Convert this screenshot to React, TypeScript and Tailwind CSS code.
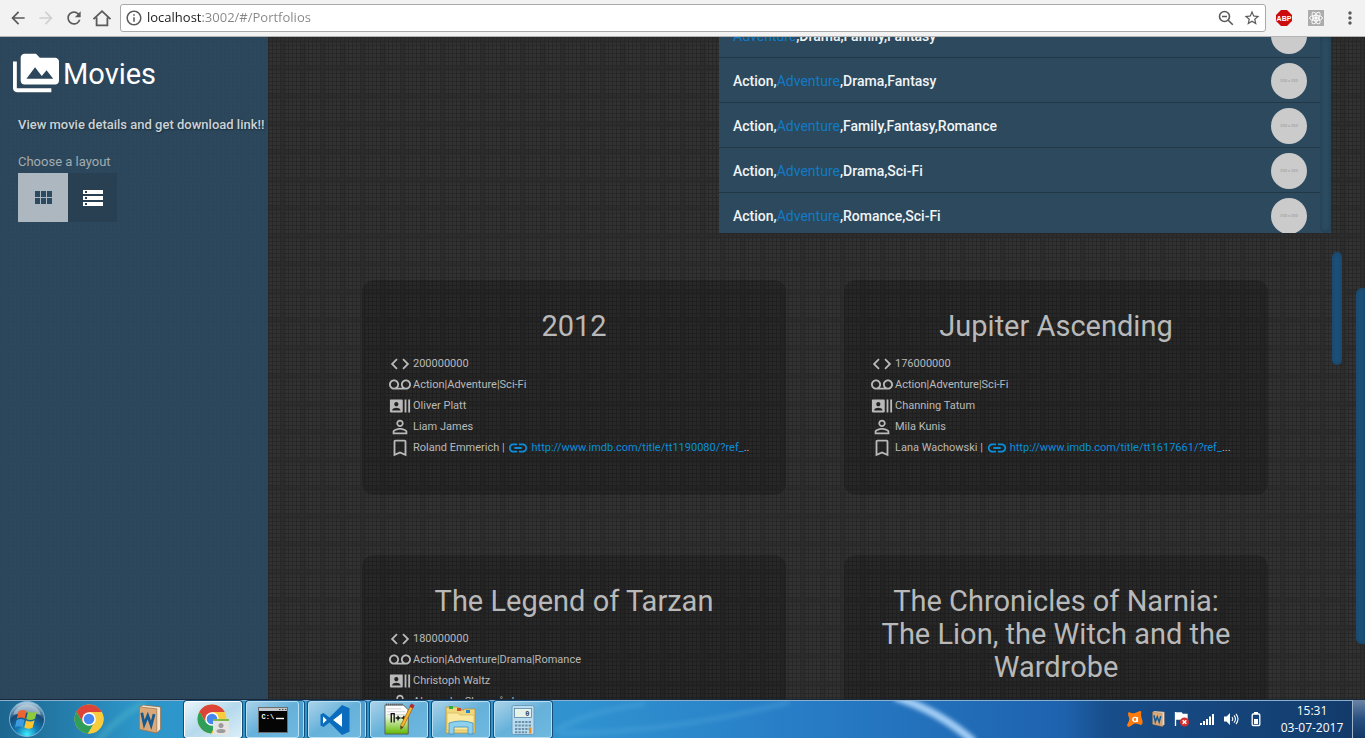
import React from "react";
import {
  MdArrowBack,
  MdArrowForward,
  MdRefresh,
  MdInfoOutline,
  MdStarBorder,
  MdMoreVert,
  MdPermMedia,
  MdCode,
  MdVoicemail,
  MdRecentActors,
  MdPermIdentity,
  MdBookmarkBorder,
  MdLink,
} from "react-icons/md";

type Movie = {
  title: string;
  budget: string;
  genres: string;
  actor: string;
  coActor: string;
  director?: string;
  url?: string;
  rest?: string;
};

const movies: Movie[] = [
  {
    title: "2012",
    budget: "200000000",
    genres: "Action|Adventure|Sci-Fi",
    actor: "Oliver Platt",
    coActor: "Liam James",
    director: "Roland Emmerich",
    url: "http://www.imdb.com/title/tt1190080/?ref_",
    rest: "..",
  },
  {
    title: "Jupiter Ascending",
    budget: "176000000",
    genres: "Action|Adventure|Sci-Fi",
    actor: "Channing Tatum",
    coActor: "Mila Kunis",
    director: "Lana Wachowski",
    url: "http://www.imdb.com/title/tt1617661/?ref_",
    rest: "...",
  },
  {
    title: "The Legend of Tarzan",
    budget: "180000000",
    genres: "Action|Adventure|Drama|Romance",
    actor: "Christoph Waltz",
    coActor: "Alexander Skarsgård",
  },
  {
    title: "The Chronicles of Narnia: The Lion, the Witch and the Wardrobe",
    budget: "180000000",
    genres: "Adventure|Family|Fantasy",
    actor: "Jim Broadbent",
    coActor: "Kiran Shah",
  },
];

const suggestions = [
  ["", ",Drama,Family,Fantasy"],
  ["Action,", ",Drama,Fantasy"],
  ["Action,", ",Family,Fantasy,Romance"],
  ["Action,", ",Drama,Sci-Fi"],
  ["Action,", ",Romance,Sci-Fi"],
];

function BrowserBar() {
  return (
    <header className="flex h-[37px] shrink-0 items-center border-b border-[#b5b5b5] bg-[#f2f2f2] text-[#5a5a5a]">
      <nav className="flex items-center gap-2 pl-2">
        <button aria-label="Back"><MdArrowBack className="size-5" /></button>
        <button aria-label="Forward" className="text-[#d0d0d0]"><MdArrowForward className="size-5" /></button>
        <button aria-label="Reload"><MdRefresh className="size-5" /></button>
        <button aria-label="Home">
          <svg viewBox="0 0 20 20" className="size-5" fill="none" stroke="currentColor" strokeWidth="1.8">
            <path d="M1.500 11.200 10 3.200l8.500 8M4.600 9.500v7.800h10.800V9.500" />
          </svg>
        </button>
      </nav>
      <div className="ml-2 flex h-7 flex-1 items-center rounded-[3px] border border-[#a9a9a9] bg-white pr-1">
        <MdInfoOutline className="ml-1 size-[18px]" />
        <input
          aria-label="Address"
          defaultValue="localhost:3002/#/Portfolios"
          className="ml-1 min-w-0 flex-1 bg-linear-to-r from-[#1c1c1c] from-[55px] to-[#858585] to-[55px] bg-clip-text font-['Open_Sans',sans-serif] text-[13px] text-transparent outline-none"
        />
        <button aria-label="Zoom" className="mr-2">
          <svg viewBox="0 0 18 18" className="size-[18px]" fill="none" stroke="currentColor" strokeWidth="1.600">
            <circle cx="7.500" cy="7.500" r="5" />
            <path d="M5 7.500h5M11.200 11.200l4.600 4.600" />
          </svg>
        </button>
        <button aria-label="Bookmark"><MdStarBorder className="size-[18px]" /></button>
      </div>
      <div className="flex items-center gap-4 pr-[9px] pl-[10px]">
        <button aria-label="Adblock Plus">
          <svg viewBox="0 0 16 16" className="size-4">
            <path d="M5 0h6l5 5v6l-5 5H5l-5-5V5z" fill="#cc0c0c" />
            <text x="8" y="10.800" textAnchor="middle" fontFamily="Liberation Sans" fontWeight="700" fontSize="7" fill="#fff">ABP</text>
          </svg>
        </button>
        <button aria-label="React tools">
          <svg viewBox="0 0 16 16" className="size-4" fill="none" stroke="#fff" strokeWidth=".9">
            <rect width="16" height="16" fill="#acacac" stroke="none" />
            <ellipse cx="8" cy="8" rx="6.500" ry="2.600" />
            <ellipse cx="8" cy="8" rx="6.500" ry="2.600" transform="rotate(60 8 8)" />
            <ellipse cx="8" cy="8" rx="6.500" ry="2.600" transform="rotate(120 8 8)" />
            <circle cx="8" cy="8" r="1.300" fill="#fff" />
          </svg>
        </button>
        <button aria-label="Menu" className="-mr-1 flex w-5 justify-center"><MdMoreVert className="size-5" /></button>
      </div>
    </header>
  );
}

function Sidebar() {
  return (
    <aside className="w-[268px] shrink-0 bg-[#2c4a60]/90 pt-4">
      <h1 className="ml-[13px] flex h-10 items-center gap-1 text-[29px] leading-10 text-white">
        <MdPermMedia className="size-[46px] shrink-0" />
        <span className="pt-[2px]">Movies</span>
      </h1>
      <p className="mt-[18px] ml-[18px] text-[13px] leading-7 font-medium whitespace-nowrap text-[#cbd2d6] [text-shadow:1px_1px_2px_#1a2c3a]">
        View movie details and get download link!!
      </p>
      <p className="mt-[13px] ml-[18px] text-[13px] leading-5 text-[#a3abb0]">Choose a layout</p>
      <div className="mt-[1px] ml-[18px] flex">
        <button aria-label="Grid layout" className="flex h-[49px] w-[50px] items-center justify-center bg-[#acb7c0] text-[#2c4a60]">
          <svg viewBox="0 0 24 24" className="size-6" fill="currentColor">
            <path d="M4 11h5V5H4v6zm0 7h5v-6H4v6zm6 0h5v-6h-5v6zm6 0h5v-6h-5v6zm-6-7h5V5h-5v6zm6-6v6h5V5h-5z" />
          </svg>
        </button>
        <button aria-label="List layout" className="flex h-[49px] w-[49px] items-center justify-center bg-[#293f52] text-white">
          <svg viewBox="0 0 24 24" className="size-6" fill="currentColor">
            <path d="M2 20h20v-4H2v4zm2-3h2v2H4v-2zM2 4v4h20V4H2zm4 3H4V5h2v2zm-4 7h20v-4H2v4zm2-3h2v2H4v-2z" />
          </svg>
        </button>
      </div>
    </aside>
  );
}

function Suggestions() {
  return (
    <div className="mr-[25px] flex h-[196px] w-9/16 shrink-0 self-end overflow-hidden bg-[#2c495d]">
      <ul className="-mt-6 flex-1">
        {suggestions.map(([before, after], i) => (
          <li key={i} className="flex h-[45px] items-center justify-between border-b border-[#223847] pt-[2px] pr-[13px] pl-[14px] text-sm font-medium text-[#f1f4f6]">
            <span>
              {before}
              <span className="font-normal text-[#137ac6]">Adventure</span>
              {after}
            </span>
            <span className="flex size-9 items-center justify-center rounded-full bg-[#cbcbcb] text-[4px] font-bold text-[#a8a8a8]">
              350 x 350
            </span>
          </li>
        ))}
      </ul>
      <div className="w-[11px] rounded-b-md bg-[#2c4c63] shadow-[inset_0_0_5px_#20394a]" />
    </div>
  );
}

function Row({ icon, children }: { icon: React.ReactNode; children: React.ReactNode }) {
  return (
    <li className="flex h-[21px] items-center gap-[2px] whitespace-nowrap [&>svg]:size-[22px] [&>svg]:shrink-0">
      {icon}
      <span className="flex items-center pt-[1px] leading-[18px]">{children}</span>
    </li>
  );
}

function MovieCard({ movie }: { movie: Movie }) {
  return (
    <article className="min-h-[215px] min-w-0 rounded-xl bg-black/20 px-[27px] pt-[30px] text-[#b9b9b9]">
      <h2 className="text-center text-[29px] leading-[33px]">{movie.title}</h2>
      <ul className="mt-[10px] text-[11px]">
        <Row icon={<MdCode />}>{movie.budget}</Row>
        <Row icon={<MdVoicemail />}>{movie.genres}</Row>
        <Row icon={<MdRecentActors />}>{movie.actor}</Row>
        <Row icon={<MdPermIdentity />}>{movie.coActor}</Row>
        {movie.url && (
          <Row icon={<MdBookmarkBorder />}>
            {movie.director}&nbsp;|&nbsp;
            <a href={movie.url} className="flex items-center gap-[2px] text-[#0a8ed9]">
              <MdLink className="size-[22px]" />
              {movie.url}
            </a>
            {movie.rest}
          </Row>
        )}
      </ul>
    </article>
  );
}

function ChromeLogo() {
  return (
    <svg viewBox="0 0 30 30" className="size-[30px]">
      <circle cx="15" cy="15" r="14.500" fill="#f9cc3e" />
      <path d="M2.400 7.800A14.500 14.500 0 0 1 27.700 8H15L9 18.500z" fill="#dc4437" />
      <path d="M9 18.500 2.400 7.800A14.500 14.500 0 0 0 14 29.500l6.200-11z" fill="#2e9e58" />
      <path d="M15 8h12.700A14.500 14.500 0 0 1 14 29.500l7-11z" fill="#f9cc3e" />
      <circle cx="15" cy="15" r="6.800" fill="#fff" />
      <circle cx="15" cy="15" r="5.300" fill="#4686ef" />
    </svg>
  );
}

function BookLogo({ className }: { className: string }) {
  return (
    <svg viewBox="0 0 24 30" className={className}>
      <path d="M1 2 5 0l18 2v23l-4 4z" fill="#efe4d3" stroke="#8f6a48" strokeWidth=".8" />
      <path d="m1 2 18 2v25L1 25z" fill="#d9a878" stroke="#a87546" strokeWidth=".8" />
      <path d="m3.500 8 2.500 12 3.700-9 3.500 10 3-11.500" fill="none" stroke="#155a91" strokeWidth="2.800" />
    </svg>
  );
}

function StartOrb() {
  return (
    <svg viewBox="0 0 38 38" className="size-[38px]">
      <defs>
        <radialGradient id="orb" cx=".5" cy=".95" r=".9">
          <stop offset="0" stopColor="#3ff0ff" />
          <stop offset=".35" stopColor="#127ab5" />
          <stop offset=".7" stopColor="#164a78" />
          <stop offset="1" stopColor="#a9c5d8" />
        </radialGradient>
      </defs>
      <circle cx="19" cy="19" r="17.500" fill="url(#orb)" stroke="#7db4d6" />
      <path d="M5 15a14.500 14.500 0 0 1 28 0q-14-5-28 0z" fill="#d3e2ec" opacity=".55" />
      <path d="M10.500 11.500q4-2.500 8-.5l-1.700 7.500q-4-2-8 .3z" fill="#ed6430" />
      <path d="M20 11.500q4.500 2.300 9-.3l-2 7.600q-4.300 2.400-8.700.200z" fill="#8fca3c" />
      <path d="M8.500 20.200q4-2.300 8-.2l-1.800 7.200q-3.900-2-7.700.2z" fill="#3f9be0" />
      <path d="M18 20.400q4.300 2.200 8.600-.2l-1.900 7.300q-4.200 2.300-8.400.1z" fill="#fbc62f" />
    </svg>
  );
}

function TaskButton({ label, active, stacked, children }: { label: string; active?: boolean; stacked?: boolean; children: React.ReactNode }) {
  return (
    <div className={stacked ? "flex w-[58px] rounded-[3px] border-r border-[#b3dcf1] bg-[#4b9fd0] pr-1 ring-1 ring-[#174d78]" : "flex w-[58px] rounded-[3px] ring-1 ring-[#174d78]"}>
      <button
        aria-label={label}
        className={
          active
            ? "flex flex-1 items-center justify-center rounded-[3px] border border-white bg-linear-to-br from-[#e9f5fb] via-[#b5d9ec] to-[#d9eef8]"
            : "flex flex-1 items-center justify-center rounded-[3px] border border-[#b9dff2] bg-linear-to-br from-[#a9d2e8] via-[#65b1da] to-[#6fb9e0]"
        }
      >
        {children}
      </button>
    </div>
  );
}

function Taskbar() {
  return (
    <footer className="relative flex h-[39px] shrink-0 items-stretch overflow-hidden border-t border-[#17283a] bg-[#277bc5]">
      <svg className="absolute inset-0 h-full w-full" viewBox="0 0 1365 39" preserveAspectRatio="none" aria-hidden="true">
        <defs>
          <linearGradient id="bar">
            <stop offset="0" stopColor="#1c668f" />
            <stop offset=".1" stopColor="#2d96c9" />
            <stop offset=".42" stopColor="#3093d0" />
            <stop offset=".6" stopColor="#277bc5" />
            <stop offset=".78" stopColor="#1e62ae" />
            <stop offset=".81" stopColor="#184e8b" />
            <stop offset="1" stopColor="#123a69" />
          </linearGradient>
          <filter id="soft" x="-20%" y="-50%" width="140%" height="200%"><feGaussianBlur stdDeviation="2" /></filter>
        </defs>
        <rect width="1365" height="39" fill="url(#bar)" />
        <path d="M895-3q44 14 79 46" fill="none" stroke="#a2cdf5" strokeWidth="8" filter="url(#soft)" />
        <path d="M555 32q30-20 90-28M560 34q110 0 230-32" fill="none" stroke="#5bb1df" strokeWidth="5" opacity=".3" filter="url(#soft)" />
        <path d="M95 45q25-30 50-42" fill="none" stroke="#50b9c9" strokeWidth="7" opacity=".4" filter="url(#soft)" />
        <rect width="1365" height="1" fill="#8fb2d0" />
      </svg>
      <div className="relative flex w-[184px] items-center">
        <button aria-label="Start" className="ml-2"><StartOrb /></button>
        <button aria-label="Chrome" className="ml-7"><ChromeLogo /></button>
        <button aria-label="Dictionary" className="ml-[34px]"><BookLogo className="h-[29px] w-6" /></button>
      </div>
      <div className="relative flex gap-1 pt-[1px]">
        <TaskButton label="Chrome window" active>
          <svg viewBox="0 0 34 34" className="size-[34px]">
            <circle cx="16" cy="16" r="14.500" fill="#f9cc3e" />
            <path d="M3.400 8.800A14.500 14.500 0 0 1 28.700 9H16l-6 10z" fill="#dc4437" />
            <path d="M10 19.500 3.400 8.800A14.500 14.500 0 0 0 15 30.500l6.200-11z" fill="#2e9e58" />
            <circle cx="16" cy="16" r="6.800" fill="#fff" />
            <circle cx="16" cy="16" r="5.300" fill="#4686ef" />
            <rect x="17" y="16" width="16" height="16" fill="#e3e3e3" />
            <rect x="17" y="16" width="16" height="2" fill="#7ab648" />
            <circle cx="25" cy="22.500" r="2.500" fill="#9b9b9b" />
            <ellipse cx="25" cy="28" rx="4.500" ry="2" fill="#9b9b9b" />
          </svg>
        </TaskButton>
        <TaskButton label="Command prompt" stacked>
          <svg viewBox="0 0 30 26" className="h-[26px] w-[30px]">
            <rect x=".5" y=".5" width="29" height="25" fill="#050505" stroke="#6d6d6d" />
            <rect x="1" y="1" width="28" height="3" fill="#c3c8cc" />
            <path d="M21 2.500h1.500m1.500 0h1.500m1.500 0h1.500" stroke="#444" />
            <text x="3.500" y="12" fontFamily="Liberation Mono" fontWeight="700" fontSize="7" fill="#fff">C:\</text>
            <path d="M18 11.500h8" stroke="#fff" strokeWidth="1.400" />
          </svg>
        </TaskButton>
        <TaskButton label="Visual Studio Code" stacked>
          <svg viewBox="0 0 30 30" className="size-[30px]">
            <path fillRule="evenodd" d="M22 0 9.500 12.500 3.500 8 .5 9.500v11l3 1.500 6-4.500L22 30l7.500-3.200V3.200zM3 11.500 6.700 15 3 18.500zm19-3.200v13.400L13.200 15z" fill="#0b6cbe" />
            <path d="M3 11.500 6.700 15 3 18.500zM22 8.300v13.400L13.200 15z" fill="#fff" />
          </svg>
        </TaskButton>
        <TaskButton label="Notepad++">
          <svg viewBox="0 0 32 34" className="h-[33px] w-[31px]">
            <defs><linearGradient id="np" x2="0" y2="1"><stop offset=".3" stopColor="#fff" /><stop offset="1" stopColor="#62b800" /></linearGradient></defs>
            <path d="M1 2h19l5 5v25H1z" fill="url(#np)" stroke="#57605a" />
            <path d="M2 1.500h18" stroke="#555" strokeDasharray="1 1" strokeWidth="2" />
            <path d="M3 6h15M3 9h19M3 12h19" stroke="#bbb" strokeWidth=".7" />
            <path d="M7.500 20v-9h3v9M12 15.500h5m-2.500-2.500v5M18 15.500h5m-2.500-2.500v5" fill="none" stroke="#111" strokeWidth="1.400" />
            <path d="M29 3 18.500 24" stroke="#a9661a" strokeWidth="3.800" />
            <path d="M29 3 18.500 24" stroke="#f3b62e" strokeWidth="2.400" />
            <path d="m29.800 1.300-1.800 3.500" stroke="#b92632" strokeWidth="4" />
            <path d="m16.800 23.200 3.400 1.700-3.200 2.800z" fill="#5c3c1d" />
          </svg>
        </TaskButton>
        <TaskButton label="File explorer">
          <svg viewBox="0 0 32 30" className="h-[30px] w-8">
            <path d="M1 5V2h12l1 3h5V4h11v24H1z" fill="#f0d77c" stroke="#b8943b" strokeWidth=".8" />
            <path d="M4 1h4v3H4z" fill="#2cae43" /><path d="M12 3h4v3h-4z" fill="#ce4d26" /><path d="M21 5h4v3h-4z" fill="#2687cc" />
            <path d="M2 8h11l2 2h14v15H2z" fill="#fae99e" stroke="#cfae57" strokeWidth=".6" />
            <path d="M4 18q12-4 24 0v11h-5v-7H9v7H4z" fill="#8fd0ee" stroke="#3f93bd" strokeWidth=".8" />
          </svg>
        </TaskButton>
        <TaskButton label="Calculator">
          <svg viewBox="0 0 24 30" className="h-[30px] w-6">
            <rect x="1" y=".5" width="22" height="29" rx="1.500" fill="#b8dcf0" stroke="#6e9cbc" />
            <rect x="3.500" y="3.500" width="17" height="9" fill="#e5f2e9" stroke="#5c87a4" strokeWidth=".8" />
            <text x="18.500" y="11" textAnchor="end" fontFamily="Liberation Mono" fontWeight="700" fontSize="7" fill="#29415c">0</text>
            <path d="M4 17h16M4 20.500h16M4 24h16M4 27.300h12" stroke="#6f8fa8" strokeWidth="2" strokeDasharray="2.400 1" />
            <path d="M19.200 22.500v6" stroke="#ef8e1c" strokeWidth="2.400" />
          </svg>
        </TaskButton>
      </div>
      <div className="relative ml-auto flex items-center text-white">
        <div className="flex items-center gap-2">
          <svg viewBox="0 0 16 16" className="size-4"><path d="M2 1q3 2 6 1l5-2q2 0 1 3 0 3 1.500 7 .5 4-2 4-3-2-6-1.500L2 16q-3-1-1.500-3Q3 9 2 6.500 0 2 2 1z" fill="#ff7b0d" /><circle cx="8" cy="8.500" r="2.100" fill="none" stroke="#fff" strokeWidth="1.400" /><path d="M10.300 6v5" stroke="#fff" strokeWidth="1.400" /></svg>
          <BookLogo className="h-4 w-[15px]" />
          <svg viewBox="0 0 16 16" className="size-4"><path d="M1.500 1v14M2.500 2h5l1 1.500H13v6H8l-1-1.500H2.500z" fill="#fff" stroke="#fff" strokeWidth="1.300" /><circle cx="10.500" cy="11" r="4.600" fill="#d32f2f" /><path d="m8.700 9.200 3.600 3.600m0-3.600-3.600 3.600" stroke="#fff" strokeWidth="1.500" /></svg>
          <svg viewBox="0 0 16 14" className="ml-[1px] h-[14px] w-4" fill="#fff"><path d="M1 11h2v2H1zM4 9h2v4H4zM7 7h2v6H7zM10 4.500h2V13h-2zM13 2h2v11h-2z" /></svg>
          <svg viewBox="0 0 16 16" className="size-4"><path d="M1 5.500h2.500L7 2v12l-3.500-3.500H1z" fill="#fff" /><path d="M9 6q1.500 2 0 4M11 4.300q3 3.700 0 7.400M13 2.800q4 5.200 0 10.400" fill="none" stroke="#fff" strokeWidth="1.100" /></svg>
          <svg viewBox="0 0 16 16" className="ml-[1px] size-4"><path d="M6 1h4v2H6z" fill="#fff" /><rect x="4.200" y="3" width="7.600" height="11.500" rx="1" fill="none" stroke="#fff" strokeWidth="1.300" /><path d="M6 8h4v5H6z" fill="#fff" /></svg>
        </div>
        <div className="ml-4 w-16 text-center font-['Open_Sans',sans-serif] text-xs leading-[17px] whitespace-nowrap">
          <div>15:31</div>
          <div>03-07-2017</div>
        </div>
        <button aria-label="Show desktop" className="ml-2 h-full w-[13px] border-l border-[#9fb4cb] bg-linear-to-b from-[#6b84a5] via-[#274f80] to-[#123864]" />
      </div>
    </footer>
  );
}

export default function App() {
  return (
    <div className="flex h-screen flex-col overflow-hidden">
      <BrowserBar />
      <main className="flex min-h-0 flex-1 bg-[#323232] bg-[linear-gradient(#272727_1px,transparent_1px),linear-gradient(90deg,#272727_1px,transparent_1px),linear-gradient(90deg,#2d2d2d_6px,transparent_6px),linear-gradient(#2d2d2d_6px,transparent_6px)] bg-size-[4px_4px,4px_4px,20px_20px,28px_28px] font-[Roboto,sans-serif]">
        <Sidebar />
        <section className="flex min-w-0 flex-1 flex-col">
          <Suggestions />
          <div className="flex min-h-0 flex-1">
            <div className="grid min-w-0 flex-1 auto-rows-min grid-cols-2 gap-x-[58px] gap-y-[60px] overflow-hidden pt-[47px] pr-16 pl-[94px]">
              {movies.map((movie) => (
                <MovieCard key={movie.title} movie={movie} />
              ))}
            </div>
            <div className="mt-[19px] mr-[14px] h-[113px] w-[10px] rounded-md bg-[#1d5179] shadow-[inset_0_0_5px_#174060]" />
          </div>
        </section>
        <div className="mt-[251px] h-[356px] w-[9px] shrink-0 rounded-l-md bg-[#1d5179] shadow-[inset_0_0_5px_#174060]" />
      </main>
      <Taskbar />
    </div>
  );
}
